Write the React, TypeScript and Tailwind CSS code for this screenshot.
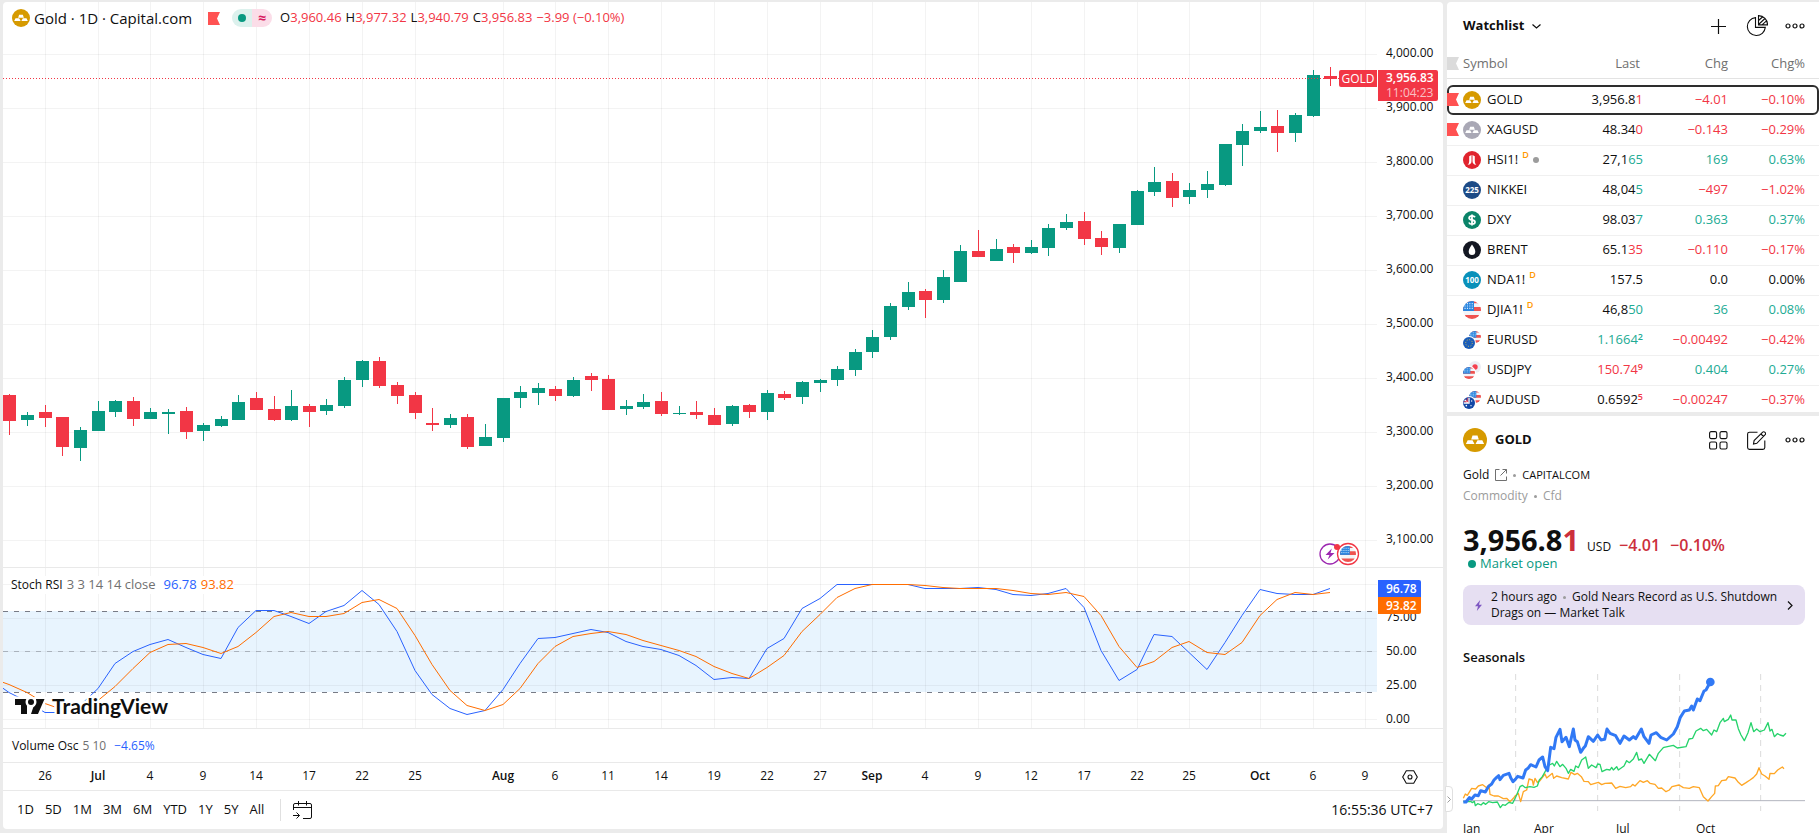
import { ReactNode } from "react";

type Candle = [up: number, high: number, low: number, top: number, bottom: number];

// 1 = close above open, then wick and body limits in pane pixels
const candles: Candle[] = [
  [0, 394, 435, 395, 421], [1, 412, 426, 415, 420], [0, 405, 427, 412, 418], [0, 417, 456, 417, 447],
  [1, 427, 461, 430, 448], [1, 401, 431, 411, 431], [1, 400, 417, 401, 412], [0, 397, 426, 401, 419],
  [1, 408, 419, 412, 419], [1, 409, 434, 412, 414], [0, 407, 439, 411, 432], [1, 423, 441, 425, 431],
  [1, 416, 427, 419, 426], [1, 395, 420, 402, 420], [0, 392, 410, 398, 410], [0, 396, 421, 409, 420],
  [1, 390, 421, 406, 420], [0, 404, 427, 406, 412], [1, 399, 415, 405, 411], [1, 377, 408, 380, 406],
  [1, 360, 387, 361, 380], [0, 357, 388, 361, 386], [0, 382, 404, 385, 396], [0, 392, 419, 395, 413],
  [0, 408, 431, 423, 425], [1, 414, 428, 418, 425], [0, 414, 449, 417, 447], [1, 424, 446, 437, 446],
  [1, 398, 442, 398, 438], [1, 386, 408, 392, 398], [1, 383, 405, 388, 393], [0, 386, 401, 389, 396],
  [1, 377, 397, 380, 396], [0, 373, 391, 376, 380], [0, 375, 410, 379, 410], [1, 400, 415, 406, 409],
  [1, 394, 409, 402, 407], [0, 392, 416, 401, 414], [1, 406, 415, 413, 414], [0, 401, 419, 412, 415],
  [0, 408, 425, 415, 425], [1, 405, 426, 406, 424], [0, 404, 418, 405, 412], [1, 390, 420, 393, 412],
  [0, 391, 400, 394, 398], [1, 381, 404, 382, 397], [1, 379, 392, 380, 383], [1, 366, 386, 369, 380],
  [1, 349, 376, 352, 370], [1, 330, 358, 337, 352], [1, 303, 340, 306, 337], [1, 282, 310, 292, 307],
  [0, 289, 318, 291, 300], [1, 270, 303, 277, 300], [1, 245, 282, 251, 282], [0, 230, 257, 251, 257],
  [1, 239, 261, 249, 261], [0, 244, 263, 247, 253], [1, 240, 254, 247, 253], [1, 224, 256, 228, 248],
  [1, 214, 230, 222, 228], [0, 212, 245, 221, 239], [0, 231, 255, 238, 247], [1, 224, 253, 224, 248],
  [1, 190, 225, 191, 225], [1, 167, 196, 182, 192], [0, 173, 207, 181, 198], [1, 183, 204, 190, 197],
  [1, 171, 198, 184, 190], [1, 144, 186, 144, 185], [1, 124, 166, 131, 145], [1, 111, 133, 127, 131],
  [0, 110, 152, 126, 133], [1, 113, 142, 115, 133], [1, 70, 117, 75, 116], [0, 67, 86, 76, 79],
];

const stochK = [
  680, 692, 701, 712, 712, 705, 688, 663, 651, 644, 639, 647, 654, 658, 627, 610, 610, 616, 623, 611, 605, 590, 604,
  631, 670, 694, 708, 714, 710, 689, 663, 638, 637, 633, 629, 632, 641, 646, 649, 655, 665, 679, 677, 678, 648, 638,
  608, 598, 584, 584, 584, 584, 584, 588, 588, 588, 587, 589, 594, 595, 593, 588, 607, 650, 680, 669, 634, 636, 652,
  669, 642, 615, 589, 593, 594, 594, 588,
];

const stochD = [
  678, 684, 692, 703, 709, 712, 700, 686, 668, 652, 644, 643, 647, 653, 646, 632, 616, 612, 616, 616, 613, 602, 599,
  608, 635, 664, 690, 705, 710, 704, 688, 663, 646, 636, 633, 631, 634, 640, 645, 650, 656, 666, 673, 678, 667, 655,
  631, 614, 597, 588, 584, 584, 584, 585, 587, 588, 588, 588, 590, 593, 594, 592, 596, 615, 646, 667, 661, 647, 641,
  652, 654, 642, 615, 599, 592, 594, 592,
];

const ticks: [number, string][] = [
  [2, "26"], [5, "Jul"], [8, "4"], [11, "9"], [14, "14"], [17, "17"], [20, "22"], [23, "25"], [28, "Aug"],
  [31, "6"], [34, "11"], [37, "14"], [40, "19"], [43, "22"], [46, "27"], [49, "Sep"], [52, "4"], [55, "9"],
  [58, "12"], [61, "17"], [64, "22"], [67, "25"], [71, "Oct"], [74, "6"], [77, "9"],
];

const prices = ["4,000.00", "3,900.00", "3,800.00", "3,700.00", "3,600.00", "3,500.00", "3,400.00", "3,300.00", "3,200.00", "3,100.00"];

const barX = (i: number) => Math.round(6.49 + 17.61 * i);

const UP = "#089981";
const DOWN = "#f23645";

function VerticalGrid() {
  return (
    <>
      {ticks.map(([i]) => (
        <rect key={i} x={barX(i)} y="0" width="1" height="100%" fill="#2e2e2e" fillOpacity="0.06" />
      ))}
    </>
  );
}

function GoldIcon({ color = "#d69a00", className }: { color?: string; className: string }) {
  return (
    <svg viewBox="0 0 24 24" className={className} aria-hidden="true">
      <circle cx="12" cy="12" r="12" fill={color} />
      <path d="M8.2 11.5 9.5 7.6h5l1.3 3.9zM2.9 16l1.8-3.7h4.8l2 3.7zM12.5 16l2-3.7h4.8l1.8 3.7z" fill="#fff" />
    </svg>
  );
}

function FlagMark({ color, className = "" }: { color: string; className?: string }) {
  return (
    <svg viewBox="0 0 12 13" className={`h-[13px] w-3 ${className}`} aria-hidden="true">
      <path d="M0 0h12L9 6.5l3 6.5H0z" fill={color} />
    </svg>
  );
}

function UsFlag({ id }: { id: string }) {
  return (
    <>
      <clipPath id={id}>
        <circle cx="9" cy="9" r="9" />
      </clipPath>
      <g clipPath={`url(#${id})`}>
        <rect width="18" height="18" fill="#f3f4f8" />
        <path d="M0 0h18v2.2H0zM0 6h18v4H0zM0 14h18v4H0z" fill="#ef5350" />
        <rect width="11" height="10" fill="#2a86e0" />
        <path
          d="M1.5 2.6h9M1.5 5h9M1.5 7.4h9"
          stroke="#d6e9fb"
          strokeWidth="1.1"
          strokeDasharray="1.1 1.3"
        />
      </g>
    </>
  );
}

function Pair({ id, front, back }: { id: string; front: ReactNode; back?: ReactNode }) {
  return (
    <>
      <g transform="translate(6 0) scale(0.667)">{back ?? <UsFlag id={`${id}-back`} />}</g>
      <circle cx="6" cy="12" r="7" fill="#fff" />
      <g transform="translate(0 6) scale(0.667)">{front}</g>
    </>
  );
}

function Logo({ name }: { name: string }) {
  if (name === "GOLD") return <GoldIcon className="size-[18px]" />;
  if (name === "XAGUSD") return <GoldIcon color="#a9a8b5" className="size-[18px]" />;

  const art: Record<string, ReactNode> = {
    "HSI1!": (
      <>
        <circle cx="9" cy="9" r="9" fill="#e0242e" />
        <path
          d="M4.600 13.800c1.200-.8 1.600-2.200 1.600-4V5.200L8.500 4v6c0 2-.8 3.600-3.900 3.800zM13.400 13.800c-1.200-.8-1.600-2.200-1.600-4V5.200L9.500 4v6c0 2 .8 3.600 3.900 3.800z"
          fill="#fff"
        />
      </>
    ),
    NIKKEI: (
      <>
        <circle cx="9" cy="9" r="9" fill="#1d4b86" />
        <text x="9" y="12" textAnchor="middle" fill="#fff" className="text-[8px] font-bold">
          225
        </text>
      </>
    ),
    DXY: (
      <>
        <circle cx="9" cy="9" r="9" fill="#0b8469" />
        <path
          d="M12 6.300C11.400 5.300 10.400 4.900 9 4.900c-1.700 0-2.900.700-2.900 2 0 3 5.900 1.200 5.900 4.200 0 1.300-1.300 2.100-3 2.100-1.500 0-2.600-.6-3.100-1.700M9 3.500v11"
          fill="none"
          stroke="#fff"
          strokeWidth="1.8"
        />
      </>
    ),
    BRENT: (
      <>
        <circle cx="9" cy="9" r="9" fill="#131722" />
        <path d="M9 3.500c1.600 2.600 3.300 4.600 3.300 6.900a3.300 3.500 0 0 1-6.600 0c0-2.300 1.700-4.300 3.300-6.900z" fill="#fff" />
      </>
    ),
    "NDA1!": (
      <>
        <circle cx="9" cy="9" r="9" fill="#0a91ba" />
        <text x="9" y="12" textAnchor="middle" fill="#fff" className="text-[8px] font-bold">
          100
        </text>
      </>
    ),
    "DJIA1!": <UsFlag id="djia" />,
    EURUSD: (
      <Pair
        id="eur"
        front={
          <>
            <circle cx="9" cy="9" r="9" fill="#1a5cb8" />
            <circle cx="9" cy="9" r="5" fill="none" stroke="#f5d33c" strokeWidth="1.4" strokeDasharray="1.3 2.6" />
          </>
        }
      />
    ),
    USDJPY: (
      <Pair
        id="jpy"
        front={<UsFlag id="jpy-front" />}
        back={
          <>
            <circle cx="9" cy="9" r="9" fill="#ecedf4" />
            <circle cx="9" cy="9" r="4" fill="#f5404f" />
          </>
        }
      />
    ),
    AUDUSD: (
      <Pair
        id="aud"
        front={
          <>
            <circle cx="9" cy="9" r="9" fill="#1247a5" />
            <path d="M2.500 4.500 8.500 9M9 1v8H1" stroke="#fff" strokeWidth="2" fill="none" />
            <path d="M4 3.500 8 8M7 1v6H1" stroke="#f5404f" strokeWidth="1.200" fill="none" />
            <circle cx="13" cy="6" r="1" fill="#fff" />
            <circle cx="12" cy="13" r="1" fill="#fff" />
            <circle cx="5" cy="13" r="1.200" fill="#fff" />
          </>
        }
      />
    ),
  };

  return (
    <svg viewBox="0 0 18 18" className="size-[18px] overflow-visible" aria-hidden="true">
      {art[name]}
    </svg>
  );
}

function PriceChart() {
  return (
    <section className="flex min-h-0 flex-1 border-b border-[#e9e9e9]">
      <div className="relative min-w-0 flex-1 overflow-hidden">
        <svg className="block h-full w-full" role="img" aria-label="Gold daily candles">
          <VerticalGrid />
          {prices.map((p, i) => (
            <rect key={p} x="0" y={52 + 54 * i} width="100%" height="1" fill="#2e2e2e" fillOpacity="0.06" />
          ))}
          <g transform="translate(0 -2)" shapeRendering="crispEdges">
            {candles.map(([up, high, low, top, bottom], i) => (
              <g key={i} fill={up ? UP : DOWN}>
                <rect x={barX(i)} y={high} width="1" height={low - high} />
                <rect x={barX(i) - 6} y={top} width="13" height={bottom - top} />
              </g>
            ))}
            <line x1="0" x2="100%" y1="78.5" y2="78.5" stroke={DOWN} strokeDasharray="1 2" />
          </g>
          <g transform="translate(1327 552)">
            <circle r="10" fill="#fff" stroke="#9c27b0" strokeWidth="1.300" />
            <path d="M1.800-5.500-4.500 1h4l-1.800 4.500L4.500-1h-4z" fill="#9c27b0" />
          </g>
          <g transform="translate(1345 552)">
            <circle r="10.500" fill="#fff" stroke={DOWN} strokeWidth="1.300" />
            <g transform="translate(-8 -8) scale(0.889)">
              <UsFlag id="event" />
            </g>
            <circle cx="-11" cy="-7" r="3" fill={DOWN} />
          </g>
        </svg>

        <div className="absolute top-[7px] left-[9px] flex h-[18px] items-center">
          <GoldIcon className="size-[18px]" />
          <h1 className="ml-1 text-[15px] whitespace-nowrap">Gold · 1D · Capital.com</h1>
          <FlagMark color="#ff5252" className="ml-4" />
          <div className="ml-3 flex h-[18px] w-10 rounded-full">
            <span className="flex flex-1 items-center justify-center rounded-l-full bg-[#dcf1ed]">
              <span className="size-2 rounded-full bg-[#089981]" />
            </span>
            <span className="flex flex-1 items-center justify-center rounded-r-full bg-[#fbdde8] text-sm leading-none font-bold text-[#d81b60]">
              ≈
            </span>
          </div>
          <dl className="ml-2 flex gap-1 text-[13px] whitespace-nowrap text-[#f23645]">
            {[["O", "3,960.46"], ["H", "3,977.32"], ["L", "3,940.79"], ["C", "3,956.83"]].map(([k, v]) => (
              <div key={k} className="flex">
                <dt className="text-[#0f0f0f]">{k}</dt>
                <dd>{v}</dd>
              </div>
            ))}
            <div>−3.99 (−0.10%)</div>
          </dl>
        </div>

        <div className="absolute top-[68px] right-0 h-[17px] w-[38px] rounded-l-xs bg-[#f23645] text-center text-xs leading-[17px] text-white">
          GOLD
        </div>
      </div>

      <div className="relative w-[66px] pt-6 text-xs">
        {prices.map((p) => (
          <div key={p} className="flex h-[54px] items-center pl-[9px]">
            {p}
          </div>
        ))}
        <div className="absolute top-[68px] left-px h-[31px] w-[60px] rounded-r-xs bg-[#f23645] pl-2 leading-[15px] text-white">
          <div className="font-semibold">3,956.83</div>
          <div className="text-white/70">11:04:23</div>
        </div>
      </div>
    </section>
  );
}

function StochPane() {
  const line = (ys: number[]) => ys.map((y, i) => `${barX(i - 1)},${y - 567.5}`).join(" ");
  return (
    <section className="flex h-[161px] border-b border-[#e9e9e9]">
      <div className="relative min-w-0 flex-1 overflow-hidden">
        <svg className="block h-full w-full" role="img" aria-label="Stochastic RSI">
          <rect x="0" y="43" width="100%" height="81" fill="#2196f3" fillOpacity="0.1" />
          <VerticalGrid />
          {[16, 50, 83, 117, 151].map((y) => (
            <rect key={y} x="0" y={y} width="100%" height="1" fill="#2e2e2e" fillOpacity="0.06" />
          ))}
          <g stroke="#787b86" strokeDasharray="5 6">
            <line x1="0" x2="100%" y1="43.500" y2="43.500" />
            <line x1="0" x2="100%" y1="83.500" y2="83.500" strokeOpacity="0.5" />
            <line x1="0" x2="100%" y1="124.500" y2="124.500" />
          </g>
          <polyline points={line(stochK)} fill="none" stroke="#2962ff" />
          <polyline points={line(stochD)} fill="none" stroke="#ff6d00" />

          <g transform="translate(12 131)" fill="#0f0f0f" stroke="#fff" strokeWidth="5" strokeLinejoin="round" paintOrder="stroke">
            <path d="M0 0h12v15H6V6H0zM21 0h8.500l-6.500 15h-7z" />
            <circle cx="16" cy="3" r="3" />
            <text x="37" y="15" className="font-['Lato',sans-serif] text-[21px] font-bold">
              TradingView
            </text>
          </g>
        </svg>
        <div className="absolute top-2 left-2 flex h-[18px] items-center bg-white text-[13px] whitespace-nowrap">
          <span className="text-xs">Stoch RSI</span>
          <span className="ml-1 text-[#707070]">3 3 14 14 close</span>
          <span className="ml-2 text-[#2962ff]">96.78</span>
          <span className="ml-1 text-[#ff6d00]">93.82</span>
        </div>
      </div>
      <div className="relative w-[66px] pt-8 text-xs">
        {["75.00", "50.00", "25.00", "0.00"].map((v) => (
          <div key={v} className="flex h-[34px] items-center pl-[9px]">
            {v}
          </div>
        ))}
        <div className="absolute top-3 left-px w-[43px] leading-[17px] font-semibold text-white">
          <div className="rounded-tr-xs bg-[#2962ff] pl-2">96.78</div>
          <div className="rounded-br-xs bg-[#ff6d00] pl-2">93.82</div>
        </div>
      </div>
    </section>
  );
}

function TimeAxis() {
  return (
    <div className="flex h-7 items-center border-b border-[#e9e9e9]">
      <svg className="block h-[27px] min-w-0 flex-1" fill="#0f0f0f">
        {ticks.map(([i, label]) => (
          <text
            key={i}
            x={barX(i)}
            y="17"
            textAnchor="middle"
            className={/[A-Z]/.test(label) ? "text-xs font-semibold" : "text-xs"}
          >
            {label}
          </text>
        ))}
      </svg>
      <button type="button" aria-label="Axis settings" className="flex w-[66px] justify-center">
        <svg width="16" height="14" viewBox="0 0 16 14" fill="none" stroke="#0f0f0f" strokeWidth="1.100">
          <path d="M4.300.700h7.400L15.300 7l-3.600 6.300H4.300L.700 7z" />
          <circle cx="8" cy="7" r="2" />
        </svg>
      </button>
    </div>
  );
}

function RangeBar() {
  return (
    <footer className="flex h-[38px] items-center pr-2.5 pl-3.5 text-[13px]">
      <div className="flex gap-[11px]">
        {["1D", "5D", "1M", "3M", "6M", "YTD", "1Y", "5Y", "All"].map((r) => (
          <button key={r} type="button">
            {r}
          </button>
        ))}
      </div>
      <span className="ml-4 h-[22px] w-px bg-[#e0e0e0]" />
      <button type="button" aria-label="Go to date" className="ml-3">
        <svg width="19" height="19" viewBox="0 0 19 19" fill="none" stroke="#0f0f0f">
          <path d="M.500 9V4a1.500 1.500 0 0 1 1.500-1.500h15A1.500 1.500 0 0 1 18.500 4v12a1.500 1.500 0 0 1-1.500 1.500h-7M.500 6.500h18M5.500 0v4.500M13.500 0v4.500M0 14.500h6.500M3.500 11.500l3 3-3 3" />
        </svg>
      </button>
      <span className="ml-auto text-sm">16:55:36 UTC+7</span>
    </footer>
  );
}

type Row = {
  name: string;
  flag?: boolean;
  delayed?: boolean;
  closed?: boolean;
  last: string;
  tail?: string;
  sup?: string;
  tone?: string;
  tailTone?: string;
  chg: string;
  pct: string;
  chgTone: string;
};

const G = "text-[#22ab94]";
const R = "text-[#f23645]";
const K = "text-[#0f0f0f]";

const rows: Row[] = [
  { name: "GOLD", flag: true, last: "3,956.8", tail: "1", tailTone: R, chg: "−4.01", pct: "−0.10%", chgTone: R },
  { name: "XAGUSD", flag: true, last: "48.34", tail: "0", tailTone: R, chg: "−0.143", pct: "−0.29%", chgTone: R },
  { name: "HSI1!", delayed: true, closed: true, last: "27,1", tail: "65", tailTone: G, chg: "169", pct: "0.63%", chgTone: G },
  { name: "NIKKEI", last: "48,04", tail: "5", tailTone: G, chg: "−497", pct: "−1.02%", chgTone: R },
  { name: "DXY", last: "98.03", tail: "7", tailTone: G, chg: "0.363", pct: "0.37%", chgTone: G },
  { name: "BRENT", last: "65.1", tail: "35", tailTone: R, chg: "−0.110", pct: "−0.17%", chgTone: R },
  { name: "NDA1!", delayed: true, last: "157.5", chg: "0.0", pct: "0.00%", chgTone: K },
  { name: "DJIA1!", delayed: true, last: "46,8", tail: "50", tailTone: G, chg: "36", pct: "0.08%", chgTone: G },
  { name: "EURUSD", last: "1.1664", tone: G, sup: "2", tailTone: G, chg: "−0.00492", pct: "−0.42%", chgTone: R },
  { name: "USDJPY", last: "150.74", tone: R, sup: "9", tailTone: R, chg: "0.404", pct: "0.27%", chgTone: G },
  { name: "AUDUSD", last: "0.6592", sup: "5", tailTone: R, chg: "−0.00247", pct: "−0.37%", chgTone: R },
];

function Dots() {
  return (
    <svg width="20" height="6" viewBox="0 0 20 6" fill="none" stroke="#0f0f0f" strokeWidth="1.200">
      <circle cx="3" cy="3" r="2" />
      <circle cx="10" cy="3" r="2" />
      <circle cx="17" cy="3" r="2" />
    </svg>
  );
}

function Watchlist() {
  return (
    <section className="h-[410px] shrink-0 overflow-hidden rounded-tl-sm bg-white">
      <header className="flex h-12 items-center pr-3.5 pl-4">
        <button type="button" className="flex items-center gap-2 text-[13px] font-bold">
          Watchlist
          <svg width="9" height="5" viewBox="0 0 9 5" fill="none" stroke="#0f0f0f" strokeWidth="1.200">
            <path d="m.500.500 4 3.500 4-3.500" />
          </svg>
        </button>
        <button type="button" aria-label="Add symbol" className="ml-auto">
          <svg width="15" height="15" viewBox="0 0 15 15" stroke="#0f0f0f" strokeWidth="1.200">
            <path d="M7.500 0v15M0 7.500h15" />
          </svg>
        </button>
        <button type="button" aria-label="Advanced view" className="ml-5">
          <svg width="22" height="22" viewBox="0 0 22 22" fill="none" stroke="#0f0f0f" strokeWidth="1.100">
            <path d="M9.500 2.600a9 9 0 1 0 9.800 9.800H9.500z" />
            <path d="M12.500.600v9.300h9A9 9 0 0 0 12.500.600zM12.500 5.500l4-3.500M12.500 9.500l6.500-6M16 9.800l4.500-4" />
          </svg>
        </button>
        <button type="button" aria-label="More" className="ml-[17px]">
          <Dots />
        </button>
      </header>
      <table className="w-full table-fixed text-[13px]">
        <thead>
          <tr className="h-7 border-b border-[#e3e3e3] text-[#707070]">
            <th className="relative pl-4 text-left font-normal">
              <FlagMark color="#dbdbdb" className="absolute top-[7px] left-0" />
              Symbol
            </th>
            <th className="w-[86px] pr-[3px] text-right font-normal">Last</th>
            <th className="w-[85px] text-right font-normal">Chg</th>
            <th className="w-[91px] pr-3.5 text-right font-normal">Chg%</th>
          </tr>
        </thead>
        <tbody>
          <tr aria-hidden="true">
            <td colSpan={4} className="h-[7px]" />
          </tr>
          {rows.map((r, i) => (
            <tr
              key={r.name}
              className={
                i === 0
                  ? "h-[30px] rounded-md outline-2 -outline-offset-2 outline-[#2e2e2e]"
                  : "h-[30px] border-b border-[#f0f0f0]"
              }
            >
              <td className="relative pl-4 whitespace-nowrap">
                {r.flag && <FlagMark color="#ff5252" className="absolute top-2 left-0" />}
                <span className="flex items-center">
                  <Logo name={r.name} />
                  <span className="ml-1.5">{r.name}</span>
                  {r.delayed && <sup className="top-[-5px] ml-1 text-[9px] font-semibold text-[#ff9800]">D</sup>}
                  {r.closed && <span className="ml-1 size-1.5 rounded-full bg-[#9c9c9c]" />}
                </span>
              </td>
              <td className={`text-right ${r.tone ?? K}`}>
                {r.last}
                {r.tail && <span className={r.tailTone}>{r.tail}</span>}
                {r.sup && <sup className={`top-[-4px] text-[9px] font-semibold ${r.tailTone}`}>{r.sup}</sup>}
              </td>
              <td className={`text-right ${r.chgTone}`}>{r.chg}</td>
              <td className={`pr-3.5 text-right ${r.chgTone}`}>{r.pct}</td>
            </tr>
          ))}
        </tbody>
      </table>
    </section>
  );
}

const thisYear =
  "70,516 78,516 88,503 95,507 105,495 115,497 122,482 136,486 145,470 155,462 162,450 170,442 176,437 180,449 190,436 207,430 213,445 219,455 226,448 233,439 249,444 257,420 264,415 272,404 288,411 297,390 308,381 315,410 323,422 332,352 342,356 348,322 360,298 366,335 378,322 388,350 400,297 405,330 412,335 422,367 430,355 436,348 445,320 460,334 473,315 483,330 494,328 501,297 510,310 527,317 540,340 552,318 568,330 580,320 587,326 604,297 612,320 627,340 633,315 649,308 662,322 680,330 700,312 712,290 721,262 733,243 748,240 755,228 760,240 772,207 780,212 792,183 798,180 811,156";
const lastYear =
  "70,515 92,514 97,518 103,514 106,527 113,521 123,525 130,518 137,523 146,515 158,518 172,516 181,533 188,524 196,526 207,517 218,520 230,495 240,470 247,466 256,473 270,470 282,472 292,468 298,450 307,440 318,420 328,405 338,400 343,408 350,394 360,410 368,403 378,415 385,430 392,418 402,424 407,408 415,413 425,390 437,381 445,415 455,405 468,413 473,402 480,403 486,425 500,418 510,420 515,412 520,420 530,410 535,420 552,408 560,392 568,398 580,387 590,367 596,390 605,387 612,400 628,373 646,392 655,370 668,355 672,352 700,346 712,354 738,350 747,327 758,325 768,303 782,295 790,302 800,298 815,315 822,300 830,305 840,278 850,265 853,275 865,268 872,255 876,270 888,270 895,296 903,315 913,332 924,308 933,278 941,305 950,297 960,305 973,300 984,278 990,303 996,298 1003,320 1012,311 1020,315 1030,318 1038,310";
const yearBefore =
  "70,505 76,492 82,496 95,475 107,477 115,468 128,464 140,473 147,465 150,493 162,498 175,498 190,506 200,505 210,515 220,505 226,497 235,490 242,515 250,485 260,480 267,447 277,450 280,465 285,445 292,457 300,452 315,432 320,444 337,430 341,445 350,438 365,443 385,447 393,427 404,434 412,430 424,440 432,454 445,455 452,464 475,457 485,464 495,460 515,459 527,475 540,469 557,473 572,470 578,463 585,468 600,452 610,457 622,452 630,460 645,463 655,475 665,474 678,485 688,480 696,470 717,465 730,473 748,475 760,470 778,473 790,500 804,513 815,500 824,490 826,468 835,467 845,452 858,450 865,440 885,444 895,457 905,466 918,458 930,450 940,443 950,432 957,413 965,432 975,438 987,448 990,430 1003,431 1013,420 1027,411 1032,416";

function Seasonals() {
  return (
    <>
      <h3 className="mt-[22px] text-[13px] leading-5 font-semibold">Seasonals</h3>
      <svg
        viewBox="69 132 1026 411"
        className="mt-[7px] block w-full overflow-visible"
        fill="none"
        strokeLinejoin="round"
        role="img"
        aria-label="Seasonals chart"
      >
        <path d="M227 132v411M473 132v411M719 132v411M962 132v411" stroke="#dbdbdb" strokeWidth="3" strokeDasharray="18 15" />
        <path d="M69 512h1026" stroke="#b2b5be" strokeWidth="3" />
        <polyline points={yearBefore} stroke="#ffa726" strokeWidth="4" />
        <polyline points={lastYear} stroke="#26d36b" strokeWidth="4" />
        <polyline points={thisYear} stroke="#3179f5" strokeWidth="9" />
        <circle cx="811" cy="156" r="13" fill="#3179f5" />
      </svg>
      <div className="mt-2 grid grid-cols-[71px_82px_80px_1fr] text-xs leading-5">
        {["Jan", "Apr", "Jul", "Oct"].map((m) => (
          <span key={m}>{m}</span>
        ))}
      </div>
    </>
  );
}

function Details() {
  return (
    <section className="min-h-0 flex-1 overflow-hidden bg-white pr-3.5 pl-4">
      <header className="flex h-12 items-center">
        <GoldIcon className="size-6" />
        <h2 className="ml-2 text-[13px] font-bold">GOLD</h2>
        <button type="button" aria-label="Layout" className="ml-auto">
          <svg width="19" height="19" viewBox="0 0 19 19" fill="none" stroke="#0f0f0f" strokeWidth="1.100">
            <rect x=".600" y=".600" width="7" height="7" rx="1.500" />
            <rect x="11" y=".600" width="7" height="7" rx="1.500" />
            <rect x=".600" y="11" width="7" height="7" rx="1.500" />
            <rect x="11" y="11" width="7" height="7" rx="1.500" />
          </svg>
        </button>
        <button type="button" aria-label="Edit note" className="ml-[19px]">
          <svg width="19" height="19" viewBox="0 0 19 19" fill="none" stroke="#0f0f0f" strokeWidth="1.100">
            <path d="M10.500 1.200h-8A1.900 1.900 0 0 0 .600 3.100v13.400a1.900 1.900 0 0 0 1.900 1.900h13.400a1.900 1.900 0 0 0 1.900-1.900V9.500" />
            <path d="m6.500 13 .600-3.400 8.600-8.400a1.400 1.400 0 0 1 2 0l.500.500a1.400 1.400 0 0 1 0 2L9.800 12.300zM14 3l2.500 2.500" />
          </svg>
        </button>
        <button type="button" aria-label="More" className="ml-[19px]">
          <Dots />
        </button>
      </header>

      <div className="flex h-[22px] items-center text-xs">
        <a href="#gold" className="flex items-center gap-1.5">
          Gold
          <svg width="12" height="12" viewBox="0 0 12 12" fill="none" stroke="#707070">
            <path d="M4.500.500H.500v11h11v-4M7.500.500h4v4M11.500.500l-6 6" />
          </svg>
        </a>
        <span className="mx-1.5 size-[3px] rounded-full bg-[#9c9c9c]" />
        <span className="text-[11px]">CAPITALCOM</span>
      </div>
      <div className="flex h-5 items-center text-xs text-[#9c9c9c]">
        Commodity
        <span className="mx-1.5 size-[3px] rounded-full bg-[#9c9c9c]" />
        Cfd
      </div>

      <div className="mt-[18px] flex items-baseline leading-none">
        <span className="text-[29px] leading-8 font-bold">
          3,956.8<span className="text-[#cc2f3c]">1</span>
        </span>
        <span className="ml-2 text-xs leading-none">USD</span>
        <span className="ml-2 text-base leading-none font-semibold text-[#cc2f3c]">−4.01</span>
        <span className="ml-2.5 text-base leading-none font-semibold text-[#cc2f3c]">−0.10%</span>
      </div>
      <div className="flex h-4 items-center gap-1 pl-[5px] text-[13px] text-[#089981]">
        <span className="size-2 rounded-full bg-[#089981]" />
        Market open
      </div>

      <a href="#news" className="mt-[13px] flex h-10 items-center rounded-lg bg-[#e6dff2] pr-3 pl-3 text-xs leading-4">
        <svg width="7" height="11" viewBox="0 0 7 11" className="shrink-0">
          <path d="M5.200 0 0 6.200h3L1.800 11 7 4.800H4z" fill="#7e57c2" />
        </svg>
        <span className="ml-[9px] flex-1">
          2 hours ago
          <span className="mx-1.5 inline-block size-[3px] rounded-full bg-[#9c9c9c] align-middle" />
          Gold Nears Record as U.S. Shutdown Drags on — Market Talk
        </span>
        <svg width="6" height="9" viewBox="0 0 6 9" fill="none" stroke="#0f0f0f" strokeWidth="1.200" className="shrink-0">
          <path d="m1 .500 4 4-4 4" />
        </svg>
      </a>

      <Seasonals />
    </section>
  );
}

export default function App() {
  return (
    <div className="relative flex h-screen gap-1 overflow-hidden bg-[#ebebeb] pt-0.5 pl-[3px] font-['Open_Sans','Trebuchet_MS',sans-serif] text-[#0f0f0f]">
      <main className="mb-1 flex min-w-0 flex-1 flex-col overflow-hidden rounded-sm bg-white">
        <PriceChart />
        <StochPane />
        <div className="flex h-[34px] items-center border-b border-[#e9e9e9] pl-[9px] text-xs">
          Volume Osc
          <span className="ml-1 text-[#707070]">5 10</span>
          <span className="ml-2 text-[#2962ff]">−4.65%</span>
        </div>
        <TimeAxis />
        <RangeBar />
      </main>
      <aside className="relative flex w-[372px] shrink-0 flex-col gap-1">
        <Watchlist />
        <Details />
        <button
          type="button"
          aria-label="Collapse panel"
          className="absolute bottom-[21px] -left-0.5 flex h-[26px] w-2 items-center justify-center rounded-r border border-[#e0e0e0] bg-white"
        >
          <svg width="4" height="7" viewBox="0 0 4 7" fill="none" stroke="#9c9c9c">
            <path d="m.500.500 3 3-3 3" />
          </svg>
        </button>
      </aside>
    </div>
  );
}
